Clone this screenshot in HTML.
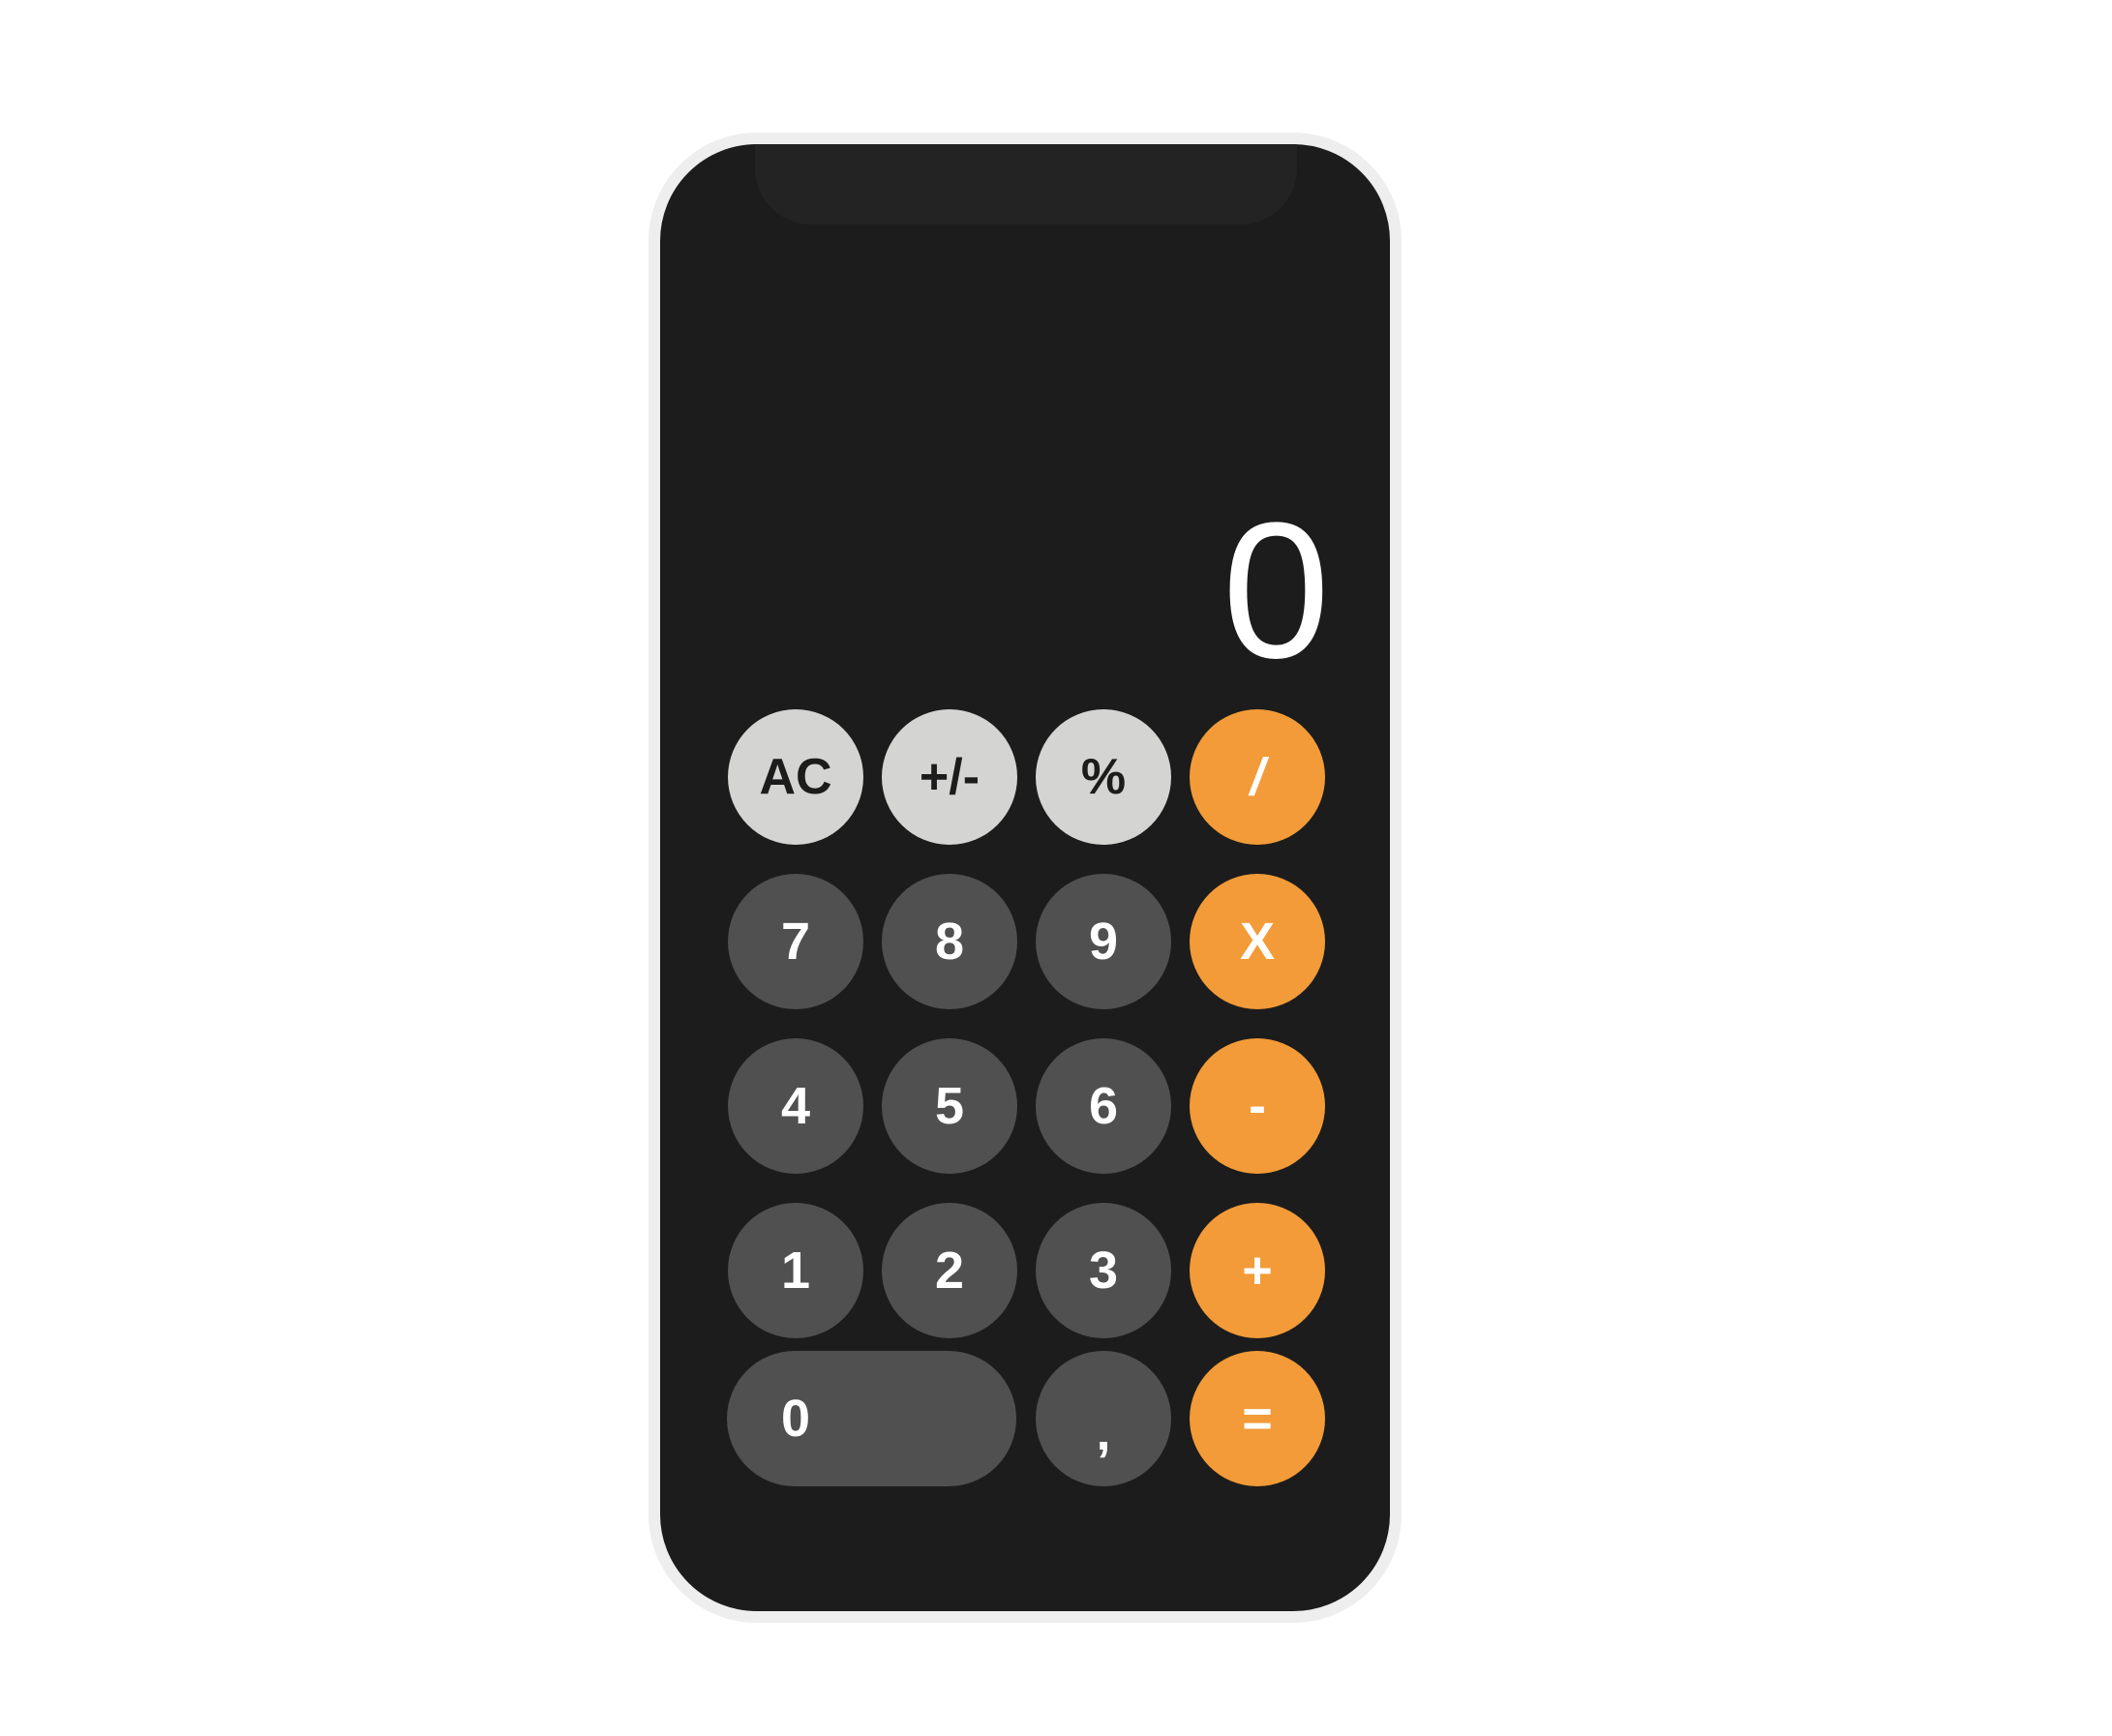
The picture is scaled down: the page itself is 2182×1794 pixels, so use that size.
<!DOCTYPE html>
<html><head><meta charset="utf-8"><style>
html,body{margin:0;padding:0;background:#fff;}
body{width:2182px;height:1794px;position:relative;overflow:hidden;font-family:"Liberation Sans",sans-serif;}
.phone{position:absolute;left:670px;top:137px;width:754px;height:1516px;border:12px solid #eeeeee;border-radius:112px;background:#1c1c1c;overflow:hidden;}
.notch{position:absolute;left:98px;top:0;width:560px;height:83px;background:#232323;border-radius:0 0 58px 58px;}
.disp{position:absolute;right:62px;top:362px;font-size:200px;color:#fff;line-height:200px;font-weight:300;}
.b{position:absolute;width:140px;height:140px;border-radius:70px;display:flex;align-items:center;justify-content:center;font-size:54px;color:#fff;line-height:1;font-weight:bold;}
.l{background:#d4d4d2;color:#1c1c1c;font-size:52px;}
.d{background:#505050;}
.o{background:#f29b38;}
.z{width:299px;justify-content:flex-start;padding-left:56px;box-sizing:border-box;}
</style></head><body>
<div class="phone">
<div class="notch"></div>
<div class="disp">0</div>
<div class="b l" style="left:70px;top:584px">AC</div>
<div class="b l" style="left:229px;top:584px">+/-</div>
<div class="b l" style="left:388px;top:584px">%</div>
<div class="b o" style="left:547px;top:584px"><i>/</i></div>

<div class="b d" style="left:70px;top:754px">7</div>
<div class="b d" style="left:229px;top:754px">8</div>
<div class="b d" style="left:388px;top:754px">9</div>
<div class="b o" style="left:547px;top:754px">X</div>

<div class="b d" style="left:70px;top:924px">4</div>
<div class="b d" style="left:229px;top:924px">5</div>
<div class="b d" style="left:388px;top:924px">6</div>
<div class="b o" style="left:547px;top:924px">-</div>

<div class="b d" style="left:70px;top:1094px">1</div>
<div class="b d" style="left:229px;top:1094px">2</div>
<div class="b d" style="left:388px;top:1094px">3</div>
<div class="b o" style="left:547px;top:1094px">+</div>

<div class="b d z" style="left:69px;top:1247px">0</div>
<div class="b d" style="left:388px;top:1247px"><span style="position:relative;top:14px">,</span></div>
<div class="b o" style="left:547px;top:1247px">=</div>
</div>
</body></html>
